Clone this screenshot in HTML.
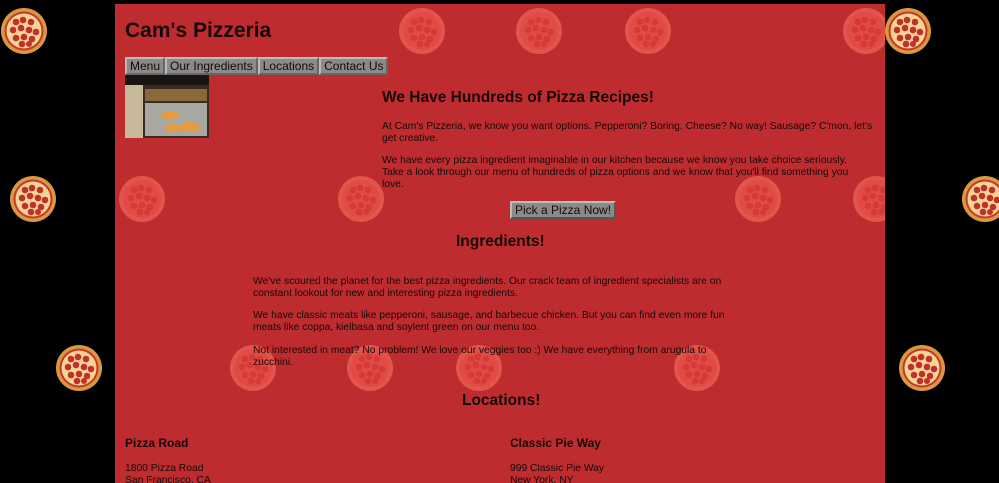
<!DOCTYPE html>
<html><head><meta charset="utf-8"><style>
*{margin:0;padding:0}
html,body{width:999px;height:483px;overflow:hidden}
body{background:#000;position:relative;font-family:"Liberation Sans",sans-serif;color:#150808}
.pz{position:absolute;width:46px;height:46px}
#c{position:absolute;left:115px;top:4px;width:770px;height:479px;background:#bf2c2f;overflow:hidden}
#c .pz{margin-left:-115px;margin-top:-4px}
.t{position:absolute;white-space:nowrap}
p.t{font-size:10.3px;line-height:12px}
h2.t{font-size:15.5px;font-weight:bold}
.nav{position:absolute;left:125px;top:57px;display:flex}
.nav span{background:#8a8a8a;border:2px solid #bbb;border-right-color:#666;border-bottom-color:#666;font-size:12px;padding:0 3px;height:14px;line-height:14px}
.btn{position:absolute;left:510px;top:201px;background:#8a8a8a;border:2px solid #bbb;border-right-color:#555;border-bottom-color:#555;font-size:12px;padding:0 3px;height:14px;line-height:14px}
</style></head><body>
<svg width="0" height="0" style="position:absolute"><defs><symbol id="p" viewBox="0 0 46 46">
<circle cx="23" cy="23" r="23" fill="#d99a3e"/><circle cx="23" cy="23" r="19.5" fill="#c8352e"/><circle cx="23" cy="23" r="17.5" fill="#f5d594"/>
<g fill="#c0302c"><circle cx="15" cy="14" r="3.3"/><circle cx="22" cy="12" r="3.3"/><circle cx="30" cy="14" r="3.3"/><circle cx="12" cy="22" r="3.3"/><circle cx="20" cy="20" r="3.3"/><circle cx="28" cy="22" r="3.3"/><circle cx="35" cy="24" r="3.3"/><circle cx="15" cy="30" r="3.3"/><circle cx="23" cy="29" r="3.3"/><circle cx="31" cy="31" r="3.3"/><circle cx="21" cy="36" r="3.3"/><circle cx="28" cy="36" r="3"/></g>
</symbol>
<symbol id="f" viewBox="0 0 46 46">
<circle cx="23" cy="23" r="23" fill="#e0554c"/><circle cx="23" cy="23" r="19" fill="#e24a45"/>
<g fill="#d43a38"><circle cx="15" cy="14" r="3.3"/><circle cx="22" cy="12" r="3.3"/><circle cx="30" cy="14" r="3.3"/><circle cx="12" cy="22" r="3.3"/><circle cx="20" cy="20" r="3.3"/><circle cx="28" cy="22" r="3.3"/><circle cx="35" cy="24" r="3.3"/><circle cx="15" cy="30" r="3.3"/><circle cx="23" cy="29" r="3.3"/><circle cx="31" cy="31" r="3.3"/><circle cx="21" cy="36" r="3.3"/><circle cx="28" cy="36" r="3"/></g>
</symbol></defs></svg>
<svg class="pz" style="left:1px;top:8px"><use href="#p"/></svg>
<svg class="pz" style="left:10px;top:176px"><use href="#p"/></svg>
<svg class="pz" style="left:56px;top:345px"><use href="#p"/></svg>
<svg class="pz" style="left:962px;top:176px"><use href="#p"/></svg>
<svg class="pz" style="left:899px;top:345px"><use href="#p"/></svg>
<svg class="pz" style="left:885px;top:8px"><use href="#p"/></svg>
<div id="c">
<svg class="pz" style="left:399px;top:8px"><use href="#f"/></svg>
<svg class="pz" style="left:516px;top:8px"><use href="#f"/></svg>
<svg class="pz" style="left:625px;top:8px"><use href="#f"/></svg>
<svg class="pz" style="left:843px;top:8px"><use href="#f"/></svg>
<svg class="pz" style="left:119px;top:176px"><use href="#f"/></svg>
<svg class="pz" style="left:338px;top:176px"><use href="#f"/></svg>
<svg class="pz" style="left:735px;top:176px"><use href="#f"/></svg>
<svg class="pz" style="left:853px;top:176px"><use href="#f"/></svg>
<svg class="pz" style="left:230px;top:345px"><use href="#f"/></svg>
<svg class="pz" style="left:347px;top:345px"><use href="#f"/></svg>
<svg class="pz" style="left:456px;top:345px"><use href="#f"/></svg>
<svg class="pz" style="left:674px;top:345px"><use href="#f"/></svg>
</div>
<div class="t" style="left:125px;top:19px;font-size:21px;font-weight:bold">Cam's Pizzeria</div>
<div class="nav"><span>Menu</span><span>Our Ingredients</span><span>Locations</span><span>Contact Us</span></div>
<svg style="position:absolute;left:125px;top:75px" width="84" height="63"><rect width="84" height="63" fill="#3a2a22"/><rect x="0" y="0" width="84" height="10" fill="#1a1410"/><rect x="20" y="28" width="62" height="33" fill="#a8a8a0"/><rect x="0" y="10" width="18" height="53" fill="#c8b89a"/><ellipse cx="45" cy="40" rx="9" ry="4" fill="#e89a40"/><ellipse cx="65" cy="52" rx="10" ry="5" fill="#e89a40"/><ellipse cx="48" cy="53" rx="8" ry="4" fill="#e89a40"/><rect x="20" y="14" width="62" height="12" fill="#8a6a3a"/></svg>
<h2 class="t" style="left:382px;top:89px">We Have Hundreds of Pizza Recipes!</h2>
<p class="t" style="left:382px;top:121px">At Cam's Pizzeria, we know you want options. Pepperoni? Boring. Cheese? No way! Sausage? C'mon, let's<br>get creative.</p>
<p class="t" style="left:382px;top:155px">We have every pizza ingredient imaginable in our kitchen because we know you take choice seriously.<br>Take a look through our menu of hundreds of pizza options and we know that you'll find something you<br>love.</p>
<div class="btn">Pick a Pizza Now!</div>
<h2 class="t" style="left:456px;top:233px">Ingredients!</h2>
<p class="t" style="left:253px;top:276px">We've scoured the planet for the best pizza ingredients. Our crack team of ingredient specialists are on<br>constant lookout for new and interesting pizza ingredients.</p>
<p class="t" style="left:253px;top:310px">We have classic meats like pepperoni, sausage, and barbecue chicken. But you can find even more fun<br>meats like coppa, kielbasa and soylent green on our menu too.</p>
<p class="t" style="left:253px;top:345px">Not interested in meat? No problem! We love our veggies too :) We have everything from arugula to<br>zucchini.</p>
<h2 class="t" style="left:462px;top:392px">Locations!</h2>
<div class="t" style="left:125px;top:436px;font-size:12px;font-weight:bold">Pizza Road</div>
<p class="t" style="left:125px;top:463px">1800 Pizza Road<br>San Francisco, CA</p>
<div class="t" style="left:510px;top:436px;font-size:12px;font-weight:bold">Classic Pie Way</div>
<p class="t" style="left:510px;top:463px">999 Classic Pie Way<br>New York, NY</p>
</body></html>
